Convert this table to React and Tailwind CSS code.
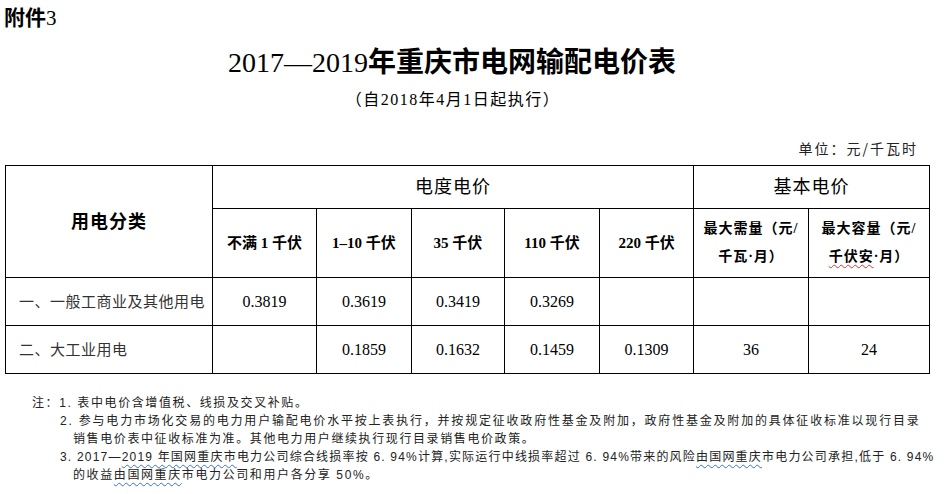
export default function App() {
  const cols = [207, 104, 95, 93, 95, 94, 115, 121];
  const cell = "border border-black text-center align-middle p-0";
  const wavyBlue = "underline decoration-wavy decoration-[#3b6fd6] decoration-1 underline-offset-[3px]";
  const rowLabel = " h-[48px] text-left pl-[13px] text-[15px] tracking-[0.5px] text-[#333] whitespace-nowrap font-['Noto_Sans_CJK_SC',sans-serif]";

  return (
    <div className="w-[948px] h-[494px] bg-white text-black overflow-hidden font-['Liberation_Serif','Noto_Sans_CJK_SC',serif]">
      {/* heading */}
      <div className="pt-[7px] pl-[4px] h-[30px] text-[21px] leading-[23px] font-bold">
        附件<span className="font-normal">3</span>
      </div>
      <h1 className="mt-[15px] h-[36px] text-center text-[28px] leading-[36px] pr-[44px]">
        <span className="font-normal">2017—2019</span>
        <span className="font-bold">年重庆市电网输配电价表</span>
      </h1>
      <div className="mt-[8px] h-[22px] text-center text-[16px] leading-[22px] tracking-[1.5px] pr-[42px]">
        （自2018年4月1日起执行）
      </div>
      <div className="mt-[27px] h-[20px] pr-[30px] text-right text-[14px] leading-[20px] tracking-[2px] font-['Noto_Sans_CJK_SC',sans-serif] text-[#222]">
        单位：元/千瓦时
      </div>

      {/* table */}
      <table className="mt-[7px] ml-[5px] w-[925px] table-fixed border-collapse">
        <colgroup>
          {cols.map((w, i) => (
            <col key={i} style={{ width: w }} />
          ))}
        </colgroup>
        <tbody>
          <tr>
            <td rowSpan={2} className={cell + " text-[18px] font-bold tracking-[1px] pt-[2px]"}>
              用电分类
            </td>
            <td colSpan={5} className={cell + " h-[43px] text-[18px] tracking-[1px]"}>
              电度电价
            </td>
            <td colSpan={2} className={cell + " text-[18px] tracking-[1px]"}>
              基本电价
            </td>
          </tr>
          <tr className="font-bold text-[15px]">
            <td className={cell + " h-[69px]"}>不满 1 千伏</td>
            <td className={cell}>1–10 千伏</td>
            <td className={cell}>35 千伏</td>
            <td className={cell}>110 千伏</td>
            <td className={cell}>220 千伏</td>
            <td className={cell + " text-[14px] leading-[28px] tracking-[1px]"}>
              最大需量（元/
              <br />
              千瓦·月）
            </td>
            <td className={cell + " text-[14px] leading-[28px] tracking-[1px]"}>
              最大容量（元/
              <br />
              <span className="underline decoration-wavy decoration-[#d33] decoration-1 underline-offset-[3px]">千伏安</span>·月）
            </td>
          </tr>
          <tr className="text-[16px]">
            <td className={cell + rowLabel}>一、一般工商业及其他用电</td>
            <td className={cell}>0.3819</td>
            <td className={cell}>0.3619</td>
            <td className={cell}>0.3419</td>
            <td className={cell}>0.3269</td>
            <td className={cell}></td>
            <td className={cell}></td>
            <td className={cell}></td>
          </tr>
          <tr className="text-[16px]">
            <td className={cell + rowLabel}>二、大工业用电</td>
            <td className={cell}></td>
            <td className={cell}>0.1859</td>
            <td className={cell}>0.1632</td>
            <td className={cell}>0.1459</td>
            <td className={cell}>0.1309</td>
            <td className={cell}>36</td>
            <td className={cell}>24</td>
          </tr>
        </tbody>
      </table>

      {/* notes */}
      <div className="mt-[20px] text-[12px] leading-[18px] tracking-[1.6px] text-[#222] whitespace-nowrap font-['Liberation_Sans','Noto_Sans_CJK_SC',sans-serif]">
        <div className="pl-[32px]">注：1. 表中电价含增值税、线损及交叉补贴。</div>
        <div className="pl-[60px] tracking-[1.8px]">
          2. 参与电力市场化交易的电力用户输配电价水平按上表执行，并按规定征收政府性基金及附加，政府性基金及附加的具体征收标准以现行目录
        </div>
        <div className="pl-[73px]">销售电价表中征收标准为准。其他电力用户继续执行现行目录销售电价政策。</div>
        <div className="pl-[60px] tracking-[1.2px]">
          3. 2017—<span className={wavyBlue}>2019 年国网重庆市</span>电力公司综合线损率按 6. 94%计算,实际运行中线损率超过 6. 94%带来的风险
          <span className={wavyBlue}>由国网重庆</span>市电力公司承担,低于 6. 94%
        </div>
        <div className="pl-[73px]">
          的收益<span className={wavyBlue}>由国网重庆</span>市电力公司和用户各分享 50%。
        </div>
      </div>
    </div>
  );
}
